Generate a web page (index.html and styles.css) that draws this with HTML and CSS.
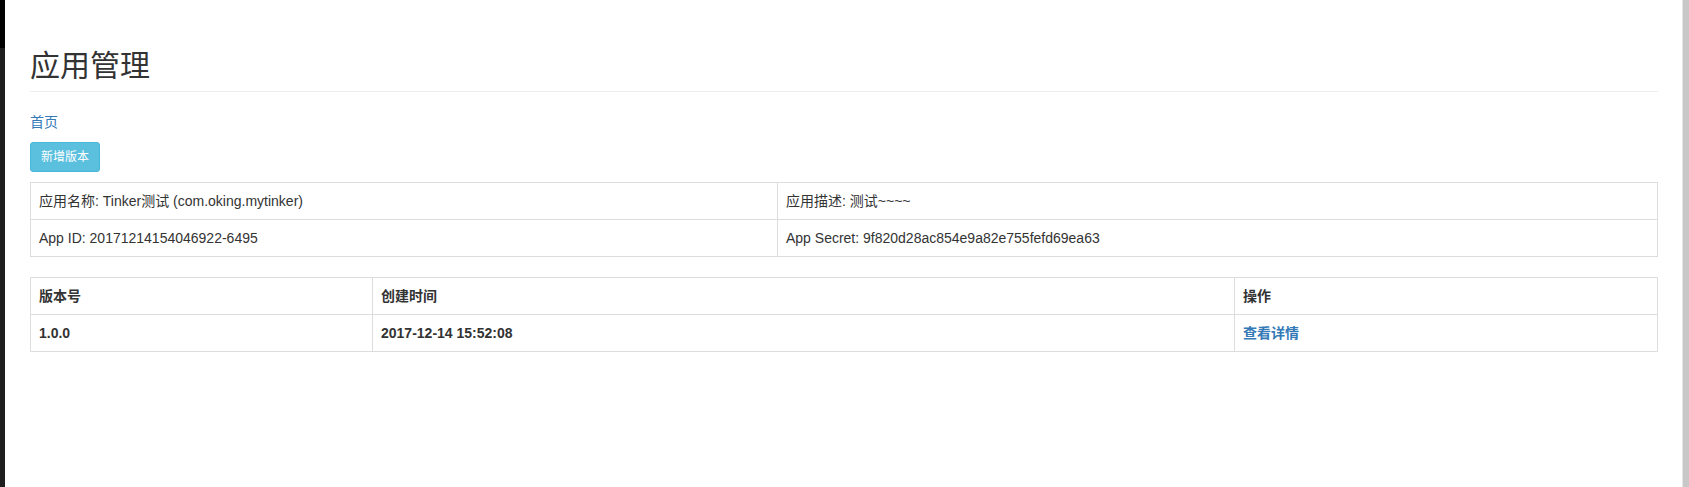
FILE: index.html
```html
<!DOCTYPE html>
<html lang="zh-CN">
<head>
  <meta charset="UTF-8">
  <meta name="viewport" content="width=device-width, initial-scale=1.0">
  <title>应用管理</title>
  <link rel="stylesheet" href="styles.css">
</head>
<body>

<div class="frame">
  <div class="side-strip"></div>

  <div class="main">
    <h1 class="page-header">应用管理</h1>

    <div class="crumbs">
      <a href="#">首页</a>
    </div>

    <div class="toolbar">
      <button class="btn btn-info">新增版本</button>
    </div>

    <table class="table info-table">
      <colgroup>
        <col class="col-left">
        <col>
      </colgroup>
      <tr>
        <td>应用名称: Tinker测试 (com.oking.mytinker)</td>
        <td>应用描述: 测试~~~~</td>
      </tr>
      <tr>
        <td>App ID: 20171214154046922-6495</td>
        <td>App Secret: 9f820d28ac854e9a82e755fefd69ea63</td>
      </tr>
    </table>

    <table class="table version-table">
      <colgroup>
        <col class="col-version">
        <col class="col-time">
        <col>
      </colgroup>
      <tr>
        <th>版本号</th>
        <th>创建时间</th>
        <th>操作</th>
      </tr>
      <tr>
        <th>1.0.0</th>
        <th>2017-12-14 15:52:08</th>
        <th><a href="#">查看详情</a></th>
      </tr>
    </table>
  </div>

  <div class="scrollbar"></div>
</div>

</body>
</html>
```

FILE: styles.css
```css
html, body {
  height: 100%;
}
body {
  margin: 0;
  font-family: "Liberation Sans", Arial, "Noto Sans CJK SC", sans-serif;
  font-size: 14px;
  line-height: 20px;
  color: #333;
  background: #fff;
}
a {
  color: #337ab7;
  text-decoration: none;
}

.frame {
  display: flex;
  height: 100%;
}
.side-strip {
  width: 5px;
  flex: none;
  background: linear-gradient(#000 0, #000 48px, #1e1e1e 48px);
}
.main {
  flex: 1;
  min-width: 0;
  padding: 49px 24px 0 25px;
}
.scrollbar {
  width: 6px;
  flex: none;
  background: #c8c8c8;
  border-left: 1px solid #e6e6e6;
}

.page-header {
  margin: 0 0 20px 0;
  padding-bottom: 9px;
  border-bottom: 1px solid #eee;
  font-size: 30px;
  line-height: 33px;
  font-weight: normal;
  color: #333;
}

.crumbs {
  margin-bottom: 10px;
}

.toolbar {
  margin-bottom: 10px;
}
.btn {
  font-family: inherit;
  font-size: 12px;
  line-height: 18px;
  padding: 5px 10px;
  border-radius: 3px;
  border: 1px solid transparent;
  cursor: pointer;
}
.btn-info {
  color: #fff;
  background: #5bc0de;
  border-color: #46b8da;
}

.table {
  width: 100%;
  border-collapse: collapse;
  table-layout: fixed;
  margin-bottom: 20px;
}
.table td,
.table th {
  border: 1px solid #ddd;
  padding: 8px;
  text-align: left;
  vertical-align: top;
}
.table th {
  font-weight: bold;
}

.col-left { width: 747px; }
.col-version { width: 342px; }
.col-time { width: 862px; }
```
